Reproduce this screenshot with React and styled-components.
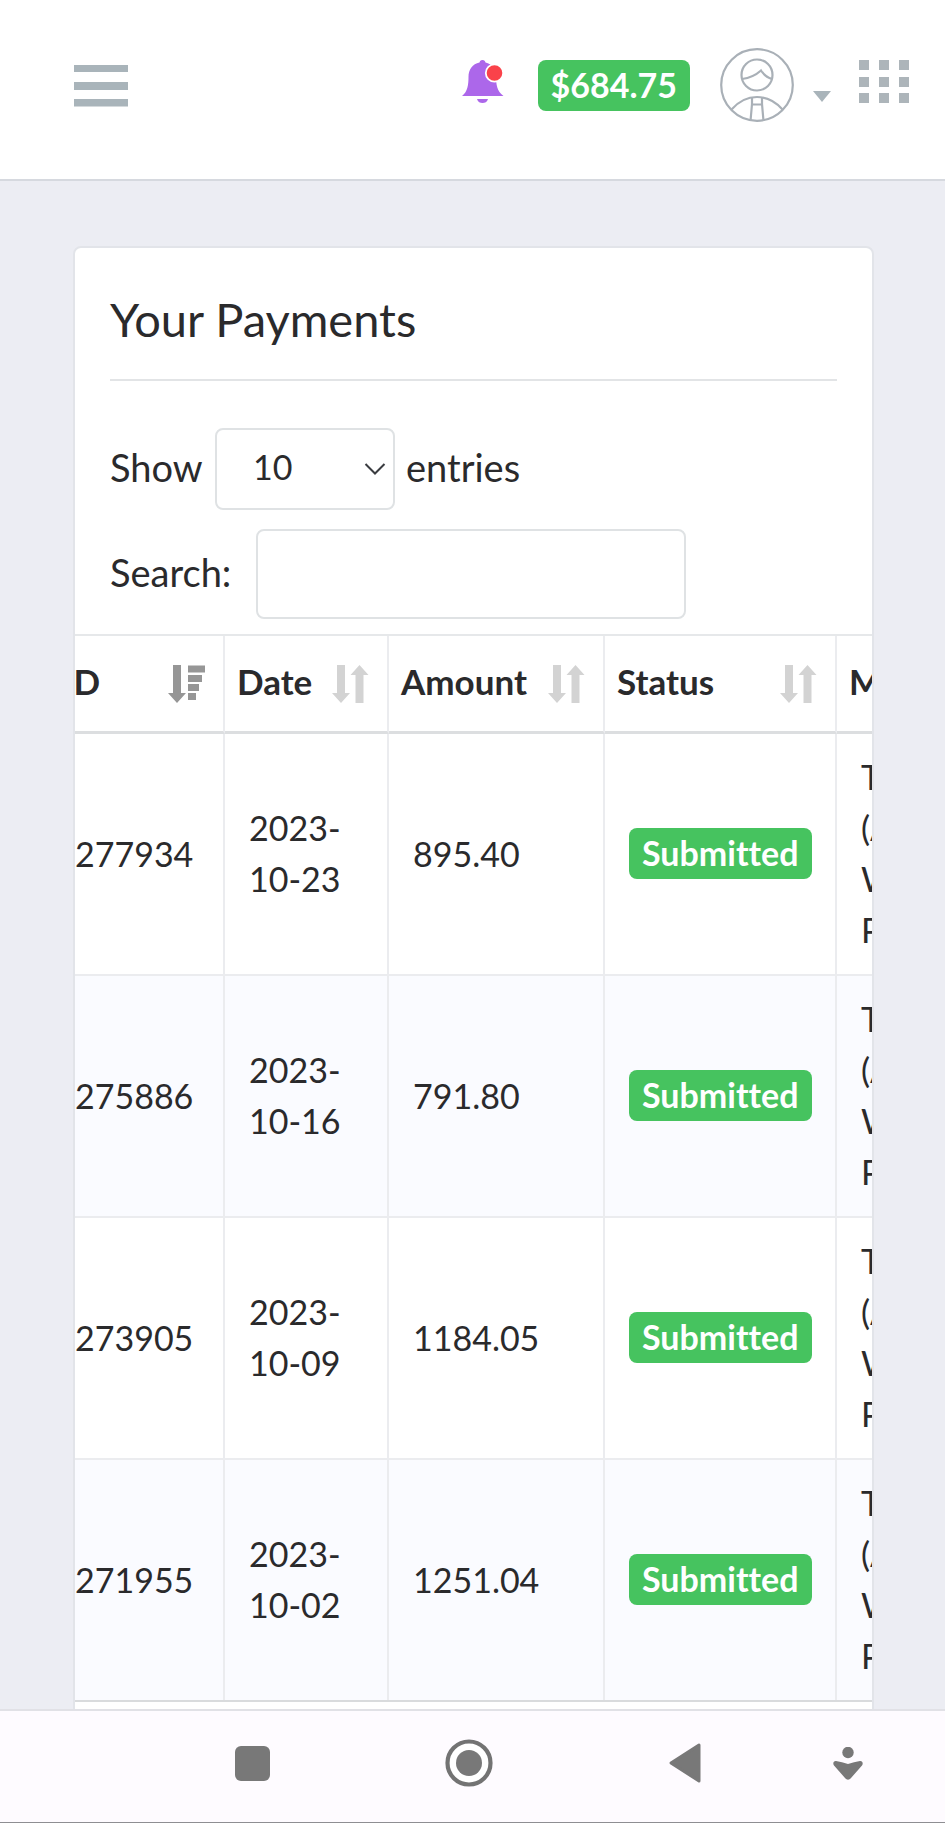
import { Component, createRef } from "react";
import styled, { createGlobalStyle } from "styled-components";

const GlobalStyle = createGlobalStyle`
    * {
        box-sizing: border-box;
    }

    body {
        margin: 0;
        background: #ecedf3;
        color: #2a2a2c;
        font-family: Lato, "Open Sans", sans-serif;
        font-size: 34px;
        line-height: 51px;
        font-variant-ligatures: none;
    }

    button, input, select {
        font: inherit;
        color: inherit;
    }
`;

const Page = styled.div`
    display: flex;
    flex-direction: column;
    height: 100vh;
`;

const Header = styled.header`
    display: flex;
    align-items: center;
    justify-content: space-between;
    flex-shrink: 0;
    padding: 48px 36px 57px 74px;
    background: #fff;
    border-bottom: 2px solid #d6d9df;
`;

const HeaderTools = styled.div`
    display: flex;
    align-items: center;
`;

const IconButton = styled.button`
    display: flex;
    align-items: center;
    gap: 19px;
    padding: 0;
    margin-left: ${props => props.$space || 0}px;
    border: 0;
    background: none;
    cursor: pointer;

    svg {
        display: block;
    }
`;

const Badge = styled.span`
    display: inline-block;
    padding: 0 13px 2px;
    border-radius: 8px;
    background: #46c35f;
    color: #fff;
    font-weight: 700;
    line-height: 49px;
    vertical-align: top;
`;

const Balance = styled(Badge)`
    min-width: 152px;
    margin-left: 34px;
    text-align: center;
`;

const Main = styled.main`
    flex: 1;
    min-height: 0;
    padding: 65px 71px 0 73px;
    overflow-y: auto;
    scrollbar-width: none;
`;

const Card = styled.section`
    padding-bottom: 40px;
    background: #fff;
    border: 2px solid #e2e4e9;
    border-radius: 8px;
    overflow: hidden;
`;

const CardHead = styled.div`
    padding: 0 35px;
`;

const Title = styled.h2`
    margin: 0 0 47px;
    padding: 41px 0 30px;
    border-bottom: 2px solid #e2e4e6;
    font-size: 47px;
    font-weight: 400;
    line-height: 60px;
`;

const Field = styled.div`
    display: flex;
    align-items: center;
    margin-bottom: ${props => props.$bottom}px;
    font-size: 38px;
`;

const FieldText = styled.label`
    min-width: ${props => props.$width || 0}px;
    padding-bottom: 4px;
`;

const SelectWrap = styled.div`
    position: relative;
    margin-right: 11px;
    font-size: 34px;

    svg {
        position: absolute;
        right: 9px;
        top: 34px;
        pointer-events: none;
    }
`;

const Select = styled.select`
    display: block;
    width: 180px;
    height: 82px;
    padding: 0 38px 6px 36px;
    border: 2px solid #dfe2e4;
    border-radius: 8px;
    background: #fff;
    appearance: none;
`;

const SearchInput = styled.input`
    width: 430px;
    height: 90px;
    padding: 0 24px;
    border: 2px solid #dfe2e4;
    border-radius: 8px;
    background: #fff;
`;

const TableScroll = styled.div`
    overflow-x: auto;
    scrollbar-width: none;
`;

const Table = styled.table`
    width: 976px;
    table-layout: fixed;
    border-spacing: 0;
    border-top: 2px solid #e6e8ea;
    border-bottom: 2px solid #d9dbdd;
`;

const Th = styled.th`
    width: ${props => props.$width}px;
    padding: 0;
    border-right: 2px solid #ebecef;
    border-bottom: 3px solid #dcdee0;
    text-align: left;
`;

const SortButton = styled.button`
    display: flex;
    align-items: center;
    justify-content: space-between;
    width: 100%;
    padding: 20px 18px 24px 12px;
    border: 0;
    background: none;
    font-size: 35px;
    font-weight: 700;
    cursor: pointer;

    svg {
        flex-shrink: 0;
        margin-top: 4px;
    }
`;

const Row = styled.tr`
    background: #fff;

    &:nth-child(even) {
        background: #fafbff;
    }

    &:last-child td {
        border-bottom: 0;
    }
`;

const Td = styled.td`
    padding: 17px 24px 19px;
    border-right: 2px solid #ebecef;
    border-bottom: 2px solid #ebecef;
    vertical-align: middle;
`;

const NavBar = styled.nav`
    display: grid;
    grid-template-columns: 2fr 2fr 2fr 1fr;
    flex-shrink: 0;
    height: 114px;
    padding: 0 43px 7px 144px;
    background: #fefbff;
    border-top: 2px solid #e1e1e6;
    border-bottom: 1px solid #8e8e92;
`;

const NavButton = styled.button`
    display: flex;
    align-items: center;
    justify-content: center;
    padding: 0;
    border: 0;
    background: none;
    cursor: pointer;
`;

const MenuIcon = () => (
    <svg width="54" height="50" viewBox="0 0 54 50" fill="#a9b4ba">
        <path d="M0 5h54v7H0zM0 22h54v8H0zM0 39h54v7.500H0z" />
    </svg>
);

const BellIcon = () => (
    <svg width="42" height="50" viewBox="0 0 42 50">
        <path
            d="M20.5 0c2 0 2.500 1.200 3 2.600C30 4.300 34 9 34 15.500c0 9 .8 15.500 7.500 20.500H0c5.500-4 6.500-11 6.500-19C6.500 9.500 10.500 4 17.500 2.600 18 1.200 18.500 0 20.500 0z"
            fill="#ac67ea"
        />
        <path d="M15 39h11c-1 3-3 4-5.500 4S16 42 15 39z" fill="#ac67ea" />
        <circle cx="32.500" cy="13" r="8.700" fill="#fa424a" stroke="#fff" strokeWidth="1.800" />
    </svg>
);

const AvatarIcon = () => (
    <svg width="74" height="74" viewBox="0 0 74 74" fill="none" stroke="#a9b0b7" strokeWidth="2.200">
        <circle cx="37" cy="37" r="35.800" />
        <circle cx="37" cy="27" r="15.500" />
        <path d="M22 31c8-1 14-4 19-8.500 3 4.500 6 7 11 8.500" />
        <path d="M11.500 61.500C19 53 27 49 37 49s18 4 25.500 12.500" />
        <path d="M32 49.500v6.500l-1.500 17M42 49.500v6.500l1.500 17M32 56.500h10" />
    </svg>
);

const CaretIcon = () => (
    <svg width="18" height="34" viewBox="0 0 18 34" fill="#a9b4ba">
        <path d="M0 23h18l-9 11z" />
    </svg>
);

const GridIcon = () => (
    <svg width="50" height="50" viewBox="0 0 50 50" fill="#adb5ba">
        {[0, 17, 33].map(y =>
            [0, 20, 40].map(x => <rect key={`${x}-${y}`} x={x} y={y} width="10" height="10" />)
        )}
    </svg>
);

const ChevronIcon = () => (
    <svg width="22" height="14" viewBox="0 0 22 14" fill="none" stroke="#3a3c40" strokeWidth="2">
        <path d="M1.500 2l9.500 9.500L20.500 2" />
    </svg>
);

const SortIcon = ({ sorted }) => (
    <svg width="37" height="38" viewBox="0 0 37 38" fill={sorted ? "#969696" : "#d3d3d3"}>
        <path d="M5 0h8v28h5l-9 10-9-10h5z" />
        {sorted
            ? <path d="M20 .5h17v7H20zM20 10h14v7H20zM20 19h11v7H20zM20 28h8v7h-8z" />
            : <path d="M23.500 38h8V10h5l-9-10-9 10h5z" />}
    </svg>
);

const columns = [
    { name: "ID", width: 174, sorted: true },
    { name: "Date", width: 164 },
    { name: "Amount", width: 216 },
    { name: "Status", width: 232 },
    { name: "Method", width: 190 },
];

const payments = [
    { id: "277934", date: "2023-10-23", amount: "895.40" },
    { id: "275886", date: "2023-10-16", amount: "791.80" },
    { id: "273905", date: "2023-10-09", amount: "1184.05" },
    { id: "271955", date: "2023-10-02", amount: "1251.04" },
];

class App extends Component {
    scroller = createRef();

    componentDidMount() {
        this.scroller.current.scrollLeft = 24;
    }

    render() {
        return (
            <Page>
                <GlobalStyle />

                <Header>
                    <IconButton aria-label="Menu"><MenuIcon /></IconButton>
                    <HeaderTools>
                        <IconButton aria-label="Notifications"><BellIcon /></IconButton>
                        <Balance>$684.75</Balance>
                        <IconButton $space={30} aria-label="Account">
                            <AvatarIcon />
                            <CaretIcon />
                        </IconButton>
                        <IconButton $space={28} aria-label="Apps"><GridIcon /></IconButton>
                    </HeaderTools>
                </Header>

                <Main>
                    <Card>
                        <CardHead>
                            <Title>Your Payments</Title>
                            <Field $bottom={19}>
                                <FieldText $width={105} htmlFor="length">Show</FieldText>
                                <SelectWrap>
                                    <Select id="length" defaultValue="10">
                                        <option>10</option>
                                        <option>25</option>
                                        <option>50</option>
                                    </Select>
                                    <ChevronIcon />
                                </SelectWrap>
                                <FieldText as="span">entries</FieldText>
                            </Field>
                            <Field $bottom={15}>
                                <FieldText $width={146} htmlFor="search">Search:</FieldText>
                                <SearchInput id="search" type="search" />
                            </Field>
                        </CardHead>

                        <TableScroll ref={this.scroller}>
                            <Table>
                                <thead>
                                    <tr>
                                        {columns.map(col => (
                                            <Th key={col.name} $width={col.width}>
                                                <SortButton>
                                                    {col.name}
                                                    <SortIcon sorted={col.sorted} />
                                                </SortButton>
                                            </Th>
                                        ))}
                                    </tr>
                                </thead>
                                <tbody>
                                    {payments.map(obj => (
                                        <Row key={obj.id}>
                                            <Td>{obj.id}</Td>
                                            <Td>{obj.date}</Td>
                                            <Td>{obj.amount}</Td>
                                            <Td><Badge>Submitted</Badge></Td>
                                            <Td>Transfer (ACH) Wire Payment</Td>
                                        </Row>
                                    ))}
                                </tbody>
                            </Table>
                        </TableScroll>
                    </Card>
                </Main>

                <NavBar>
                    <NavButton aria-label="Recent">
                        <svg width="35" height="35" viewBox="0 0 35 35">
                            <rect width="35" height="35" rx="6" fill="#787878" />
                        </svg>
                    </NavButton>
                    <NavButton aria-label="Home">
                        <svg width="48" height="48" viewBox="0 0 48 48">
                            <circle cx="24" cy="24" r="21.500" fill="#fff" stroke="#737373" strokeWidth="4.200" />
                            <circle cx="24" cy="24" r="13" fill="#787878" />
                        </svg>
                    </NavButton>
                    <NavButton aria-label="Back">
                        <svg width="32" height="40" viewBox="0 0 32 40">
                            <path
                                d="M2 20L30 2v36z"
                                fill="#787878"
                                stroke="#787878"
                                strokeWidth="3"
                                strokeLinejoin="round"
                            />
                        </svg>
                    </NavButton>
                    <NavButton aria-label="Hide bar">
                        <svg width="30" height="33" viewBox="0 0 30 33" fill="#787878">
                            <circle cx="15" cy="5.500" r="5.700" />
                            <path d="M3 14c4 .5 8 1.500 12 3 4-1.500 8-2.500 12-3 2.500-.2 3.500 2.500 2 4.500L18 31c-2 2.300-4 2.300-6 0L1 18.500c-1.500-2-.5-4.700 2-4.500z" />
                        </svg>
                    </NavButton>
                </NavBar>
            </Page>
        );
    }
}

export default App;
